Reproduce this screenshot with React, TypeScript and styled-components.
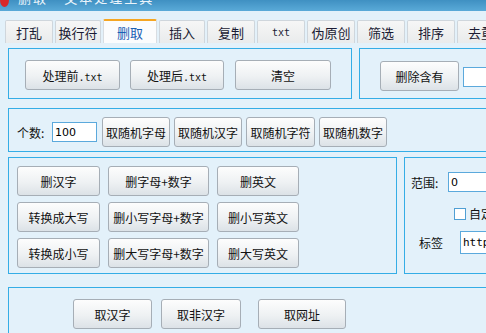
import React from 'react'
import styled, { createGlobalStyle } from 'styled-components'

const GlobalStyle = createGlobalStyle`
    html, body {
        margin: 0;
        padding: 0;
        background: #e3f1fa;
        overflow: hidden;
    }
    body {
        font-family: "Noto Sans CJK SC", "DejaVu Sans", sans-serif;
        font-size: 12px;
        color: #111;
    }
`;

const Window = styled.div`
    width: 580px;
    height: 333px;
    display: flex;
    flex-direction: column;
    background: #e3f1fa;
`;

const TitleBar = styled.div`
    height: 11px;
    flex: none;
    overflow: hidden;
    display: flex;
    align-items: flex-start;
    gap: 9px;
    background: linear-gradient(#3f90c2, #5aaad8);
`;

const TitleIcon = styled.div`
    width: 9px;
    height: 14px;
    margin-top: -7px;
    border-radius: 50%;
    background: #d8282a;
    flex: none;
`;

const TitleText = styled.div`
    color: #eaf4fb;
    font-size: 13px;
    line-height: 14px;
    margin-top: -9px;
    letter-spacing: 2px;
`;

const TabStrip = styled.div`
    display: flex;
    align-items: flex-end;
    gap: 2px;
    padding: 8px 0 0 5px;
    height: 24px;
    flex: none;
`;

const Tab = styled.div<{ $w: number; $active?: boolean; $mono?: boolean }>`
    width: ${p => p.$w}px;
    height: ${p => (p.$active ? '24px' : '23px')};
    box-sizing: border-box;
    display: flex;
    align-items: center;
    justify-content: center;
    border: 1px solid ${p => (p.$active ? '#d8dde2' : '#cfd6dc')};
    border-bottom: none;
    border-top: ${p => (p.$active ? '2px solid #f5a623' : '1px solid #cfd6dc')};
    border-radius: 2px 2px 0 0;
    background: ${p => (p.$active ? '#fbfcfd' : 'linear-gradient(#f6f6f6, #e9ebec)')};
    color: ${p => (p.$active ? '#1a5fb4' : '#1b1b33')};
    font-size: ${p => (p.$mono ? '10px' : '13px')};
    font-family: ${p => (p.$mono ? '"DejaVu Sans Mono", monospace' : 'inherit')};
`;

const Pane = styled.div`
    display: flex;
    flex-direction: column;
    padding: 5px 0 0 8px;
`;

const Row = styled.div<{ $gap?: number; $mt?: number }>`
    display: flex;
    gap: ${p => p.$gap ?? 8}px;
    margin-top: ${p => p.$mt ?? 0}px;
`;

const Group = styled.div<{ $w?: number; $h: number; $pad: string; $grow?: boolean }>`
    box-sizing: border-box;
    ${p => (p.$w ? `width: ${p.$w}px;` : '')}
    ${p => (p.$grow ? 'flex: 1;' : 'flex: none;')}
    height: ${p => p.$h}px;
    border: 1px solid #34ade6;
    padding: ${p => p.$pad};
    display: flex;
    align-items: flex-start;
`;

const Btn = styled.button<{ $w: number; $h?: number }>`
    width: ${p => p.$w}px;
    height: ${p => p.$h ?? 30}px;
    flex: none;
    box-sizing: border-box;
    border: 1px solid #a6aeb6;
    border-radius: 3px;
    background: linear-gradient(#fdfdfd, #eef1f3 55%, #dce2e7);
    font-family: inherit;
    font-size: 12px;
    color: #111;
    padding: 0;
    cursor: default;
`;

const BtnRow = styled.div<{ $gap: number; $ml?: number }>`
    display: flex;
    gap: ${p => p.$gap}px;
    margin-left: ${p => p.$ml ?? 0}px;
`;

const Mono = styled.span`
    font-family: "DejaVu Sans Mono", monospace;
    font-size: 10px;
`;

const Label = styled.span<{ $w?: number }>`
    ${p => (p.$w ? `width: ${p.$w}px;` : '')}
    flex: none;
    font-size: 12px;
`;

const TextBox = styled.input<{ $w: number; $h: number; $mono?: boolean }>`
    width: ${p => p.$w}px;
    height: ${p => p.$h}px;
    box-sizing: border-box;
    border: 1px solid #5ba9dc;
    background: #fff;
    padding: 0 2px;
    font-family: ${p => (p.$mono ? '"DejaVu Sans Mono", monospace' : '"DejaVu Sans", sans-serif')};
    font-size: 11px;
    color: #000;
    outline: none;
    flex: none;
`;

const Grid = styled.div`
    display: grid;
    grid-template-columns: 83px 101px 82px;
    grid-auto-rows: 30px;
    column-gap: 8px;
    row-gap: 6px;
`;

const Field = styled.div<{ $mt?: number; $ml?: number }>`
    display: flex;
    align-items: center;
    margin-top: ${p => p.$mt ?? 0}px;
    margin-left: ${p => p.$ml ?? 0}px;
`;

const Stack = styled.div`
    display: flex;
    flex-direction: column;
`;

const Check = styled.span`
    width: 12px;
    height: 12px;
    box-sizing: border-box;
    border: 1px solid #4f9fd4;
    background: #fff;
    margin-right: 3px;
    flex: none;
`;

const tabs = [
    { t: '打乱', w: 48 },
    { t: '换行符', w: 46 },
    { t: '删取', w: 54, active: true },
    { t: '插入', w: 46 },
    { t: '复制', w: 48 },
    { t: 'txt', w: 48, mono: true },
    { t: '伪原创', w: 48 },
    { t: '筛选', w: 48 },
    { t: '排序', w: 48 },
    { t: '去重', w: 48 },
]

const gridButtons = [
    '删汉字', '删字母+数字', '删英文',
    '转换成大写', '删小写字母+数字', '删小写英文',
    '转换成小写', '删大写字母+数字', '删大写英文',
]

export default function App() {
    return (
        <Window>
            <GlobalStyle />
            <TitleBar>
                <TitleIcon />
                <TitleText>删取 - 文本处理工具</TitleText>
            </TitleBar>
            <TabStrip>
                {tabs.map(tab => (
                    <Tab key={tab.t} $w={tab.w} $active={tab.active} $mono={tab.mono}>{tab.t}</Tab>
                ))}
            </TabStrip>
            <Pane>
                <Row $gap={7}>
                    <Group $w={344} $h={51} $pad="11px 0 0 16px">
                        <BtnRow $gap={10}>
                            <Btn $w={95}>处理前<Mono>.txt</Mono></Btn>
                            <Btn $w={94}>处理后<Mono>.txt</Mono></Btn>
                            <Btn $w={96} style={{ marginLeft: 1 }}>清空</Btn>
                        </BtnRow>
                    </Group>
                    <Group $grow $h={51} $pad="12px 0 0 20px">
                        <Btn $w={79}>删除含有</Btn>
                        <TextBox $w={80} $h={20} $mono style={{ marginLeft: 4, marginTop: 6 }} />
                    </Group>
                </Row>
                <Row $mt={9}>
                    <Group $grow $h={44} $pad="8px 0 0 8px">
                        <Field $mt={5}>
                            <Label $w={35}>个数:</Label>
                            <TextBox $w={45} $h={20} defaultValue="100" />
                        </Field>
                        <BtnRow $gap={4} $ml={5}>
                            <Btn $w={68}>取随机字母</Btn>
                            <Btn $w={68}>取随机汉字</Btn>
                            <Btn $w={69}>取随机字符</Btn>
                            <Btn $w={68}>取随机数字</Btn>
                        </BtnRow>
                    </Group>
                </Row>
                <Row $mt={5} $gap={7}>
                    <Group $w={389} $h={117} $pad="8px 0 0 8px">
                        <Grid>
                            {gridButtons.map(b => (
                                <Btn key={b} $w={b.length > 5 ? 101 : b === '删汉字' || b.startsWith('转') ? 83 : 82}>{b}</Btn>
                            ))}
                        </Grid>
                    </Group>
                    <Group $grow $h={117} $pad="14px 0 0 6px">
                        <Stack>
                            <Field>
                                <Label $w={37}>范围:</Label>
                                <TextBox $w={80} $h={20} defaultValue="0" />
                            </Field>
                            <Field $mt={13} $ml={43}>
                                <Check />
                                <Label>自定义</Label>
                            </Field>
                            <Field $mt={9} $ml={8}>
                                <Label $w={41}>标签</Label>
                                <TextBox $w={80} $h={23} $mono defaultValue="http://" />
                            </Field>
                        </Stack>
                    </Group>
                </Row>
                <Row $mt={13}>
                    <Group $grow $h={60} $pad="11px 0 0 64px">
                        <BtnRow $gap={9}>
                            <Btn $w={79}>取汉字</Btn>
                            <Btn $w={80}>取非汉字</Btn>
                            <Btn $w={88} style={{ marginLeft: 8 }}>取网址</Btn>
                        </BtnRow>
                    </Group>
                </Row>
            </Pane>
        </Window>
    )
}
